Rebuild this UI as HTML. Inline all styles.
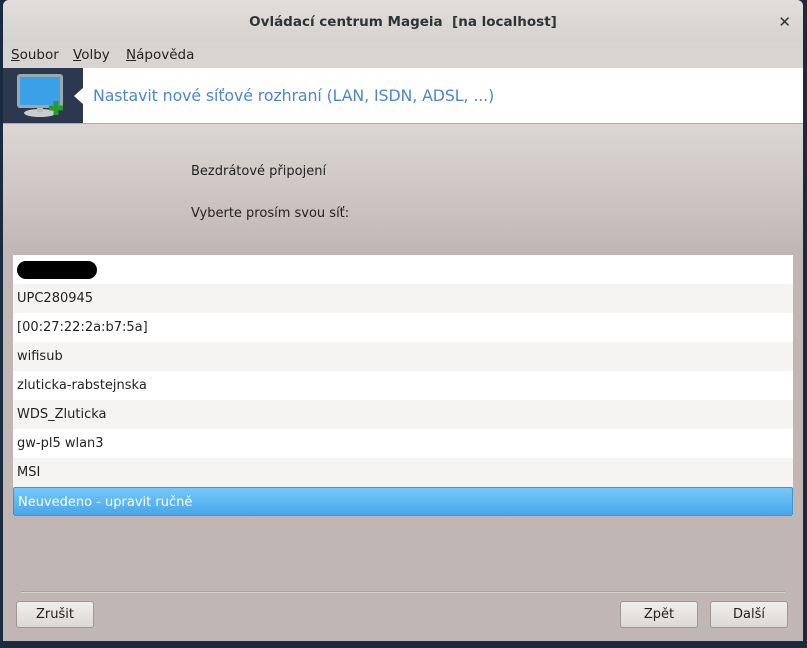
<!DOCTYPE html><html><head><style>
body{margin:0;width:807px;height:648px;background:#1b2b3f;font-family:"DejaVu Sans","Liberation Sans",sans-serif;overflow:hidden;position:relative}
.win{position:absolute;left:3px;top:0;width:800px;height:641px;background:#c0b7b4;border-radius:6px 6px 0 0;overflow:hidden}
.title{position:absolute;left:0;top:0;width:800px;height:42px;background:linear-gradient(#e2dedb,#d6d2cf);text-align:center;line-height:44px;font-weight:bold;font-size:13.5px;color:#2e3436}
.x{position:absolute;right:12px;top:0;font-size:15px}
.menu{position:absolute;top:42px;left:0;width:800px;height:26px;background:#d8d4d1;font-size:13.5px;color:#222;line-height:27px}
.menu span{position:absolute}
.ban{position:absolute;top:68px;left:0;width:800px;height:55px;background:#fff;border-bottom:1px solid #aaa}
.ban .dk{position:absolute;left:0;top:0;width:80px;height:55px;background:#2c3850}
.ban .nt{position:absolute;left:71px;top:19px;width:0;height:0;border-top:9px solid transparent;border-bottom:9px solid transparent;border-right:10px solid #fff}
.ban .t{position:absolute;left:90px;top:18px;font-size:15.8px;color:#4a86d4;letter-spacing:-0.1px}
.grad{position:absolute;top:124px;left:0;width:800px;height:130px;background:linear-gradient(#dcd7d4,#c0b7b4)}
.lbl{position:absolute;left:188px;font-size:13px;color:#222}
.list{position:absolute;left:10px;top:255px;width:780px;height:261px;background:#fff}
.r{height:29px;line-height:30px;padding-left:4px;font-size:13px;color:#222}
.r:nth-child(even){background:#f5f4f2}
.sel{background:linear-gradient(#75c8fb,#47a7e8)!important;color:#fff;border-radius:2px;border:1px solid #3a95d4;height:27px}
.sep{position:absolute;left:18px;top:591px;width:764px;height:1px;background:#d8d2cf;border-top:1px solid #a9a19e}
.b{position:absolute;top:601px;height:25px;width:76px;background:linear-gradient(#f0eeec,#dcd8d5);border:1px solid #9d9693;border-radius:3px;font-size:13px;text-align:center;line-height:25px;color:#222}
</style></head><body>
<div class="win">
<div class="title">Ovládací centrum Mageia&nbsp; [na localhost]<span class="x">✕</span></div>
<div class="menu"><span style="left:8px"><u>S</u>oubor</span><span style="left:70px"><u>V</u>olby</span><span style="left:123px"><u>N</u>ápověda</span></div>
<div class="ban"><div class="dk">
<svg width="80" height="55"><rect x="14" y="6" width="46" height="34" rx="3" fill="#9aa"/><rect x="17" y="9" width="40" height="28" fill="#3aa0e8"/><ellipse cx="37" cy="45" rx="16" ry="4" fill="#ccc"/><rect x="34" y="40" width="6" height="4" fill="#bbb"/><path d="M46 40h14M53 33v14" stroke="#2a9a2a" stroke-width="5"/></svg>
</div><div class="nt"></div><div class="t">Nastavit nové síťové rozhraní (LAN, ISDN, ADSL, ...)</div></div>
<div class="grad"></div>
<div class="lbl" style="top:164px">Bezdrátové připojení</div>
<div class="lbl" style="top:206px">Vyberte prosím svou síť:</div>
<div class="list">
<div class="r"><span style="display:inline-block;width:80px;height:18px;background:#000;border-radius:9px;vertical-align:middle"></span></div>
<div class="r">UPC280945</div><div class="r">[00:27:22:2a:b7:5a]</div><div class="r">wifisub</div><div class="r">zluticka-rabstejnska</div><div class="r">WDS_Zluticka</div><div class="r">gw-pl5 wlan3</div><div class="r">MSI</div>
<div class="r sel">Neuvedeno - upravit ručně</div>
</div>
<div class="sep"></div>
<div class="b" style="left:13px">Zrušit</div>
<div class="b" style="left:617px">Zpět</div>
<div class="b" style="left:707px">Další</div>
</div></body></html>
